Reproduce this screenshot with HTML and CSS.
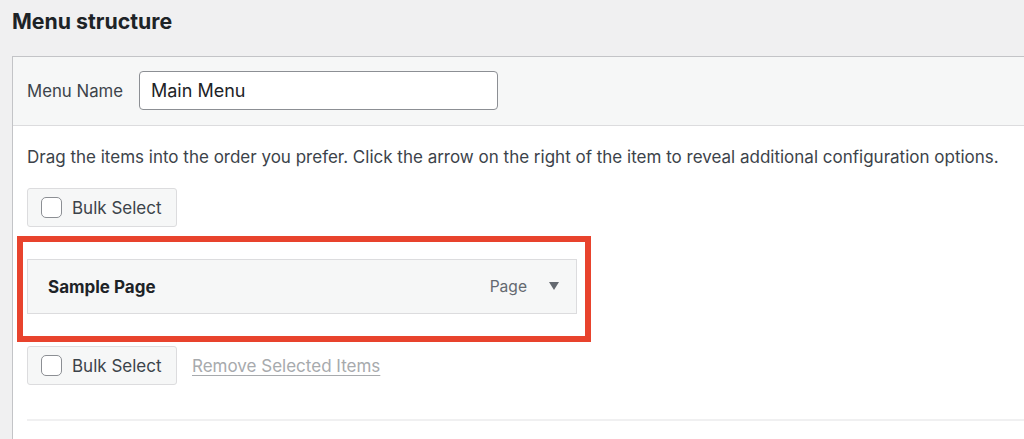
FILE: index.html
```html
<!DOCTYPE html>
<html lang="en">
<head>
<meta charset="utf-8">
<title>Menu structure</title>
<link rel="stylesheet" href="styles.css">
</head>
<body>
<h2 class="title">Menu structure</h2>
<div class="panel">
  <div class="panel-header">
    <label class="name-label" for="menu-name">Menu Name</label>
    <input class="name-input" id="menu-name" type="text" value="Main Menu">
  </div>
  <div class="panel-body">
    <p class="hint">Drag the items into the order you prefer. Click the arrow on the right of the item to reveal additional configuration options.</p>
    <div class="bulk-row">
      <label class="bulk-btn"><span class="check"></span><span>Bulk Select</span></label>
    </div>
    <div class="highlight">
      <div class="menu-item">
        <span class="item-title">Sample Page</span>
        <span class="item-type">Page</span>
        <span class="item-arrow"></span>
      </div>
    </div>
    <div class="bulk-row bulk-row-bottom">
      <label class="bulk-btn"><span class="check"></span><span>Bulk Select</span></label>
      <a class="remove-link">Remove Selected Items</a>
    </div>
    <div class="divider"></div>
  </div>
</div>
</body>
</html>
```

FILE: styles.css
```css
* { box-sizing: border-box; }
html, body { margin: 0; padding: 0; }
body {
  background: #f0f0f1;
  font-family: Inter, "Noto Sans", "Liberation Sans", sans-serif;
  color: #3c434a;
  width: 1024px;
  height: 439px;
  overflow: hidden;
}
.title {
  margin: 0;
  padding: 9px 0 0 12px;
  height: 56px;
  font-size: 21.3px;
  line-height: 24px;
  font-weight: 700;
  color: #1d2327;
}
.panel {
  margin-left: 12px;
  width: 1040px;
  border-left: 1px solid #c3c4c7;
  border-top: 1px solid #c3c4c7;
  background: #fff;
  height: 400px;
}
.panel-header {
  display: flex;
  align-items: center;
  height: 69px;
  padding: 0 0 0 14px;
  background: #f6f7f7;
  border-bottom: 1px solid #dcdcde;
}
.name-label {
  font-size: 16.8px;
  color: #3c434a;
  width: 112px;
}
.name-input {
  width: 359px;
  height: 39px;
  margin-top: -1px;
  border: 1px solid #8c8f94;
  border-radius: 4px;
  padding: 0 11px;
  font-family: inherit;
  font-size: 18px;
  color: #1d2327;
  background: #fff;
}
.panel-body {
  padding: 0 0 0 14px;
}
.hint {
  margin: 0;
  padding-top: 21px;
  font-size: 17px;
  line-height: 20px;
  color: #3c434a;
  white-space: nowrap;
}
.bulk-row {
  display: flex;
  align-items: center;
  margin-top: 21px;
}
.bulk-btn {
  display: flex;
  align-items: center;
  width: 150px;
  height: 39px;
  padding-left: 13px;
  background: #f6f7f7;
  border: 1px solid #dcdcde;
  border-radius: 3px;
  font-size: 17px;
  color: #3c434a;
}
.check {
  width: 21px;
  height: 21px;
  border: 1.5px solid #8c8f94;
  border-radius: 5px;
  background: #fff;
  margin-right: 10px;
}
.highlight {
  margin: 9px 0 0 -10px;
  width: 574px;
  height: 106px;
  border: 6px solid #e8432d;
  padding: 17px 8px 0 4px;
}
.menu-item {
  display: flex;
  align-items: center;
  height: 55px;
  padding: 0 17px 0 20px;
  background: #f6f7f7;
  border: 1px solid #dcdcde;
}
.item-title {
  font-size: 17px;
  font-weight: 700;
  color: #1d2327;
  flex: 1;
}
.item-type {
  font-size: 15.6px;
  color: #646970;
}
.item-arrow {
  width: 0;
  height: 0;
  margin-left: 22px;
  border-left: 5px solid transparent;
  border-right: 5px solid transparent;
  border-top: 8px solid #646970;
  margin-top: -2px;
}
.bulk-row-bottom {
  margin-top: 4px;
}
.remove-link {
  margin-left: 15px;
  font-size: 17px;
  color: #a7aaad;
  text-decoration: underline;
  text-underline-offset: 3px;
}
.divider {
  margin-top: 34px;
  height: 2px;
  background: #f0f0f1;
}
```
